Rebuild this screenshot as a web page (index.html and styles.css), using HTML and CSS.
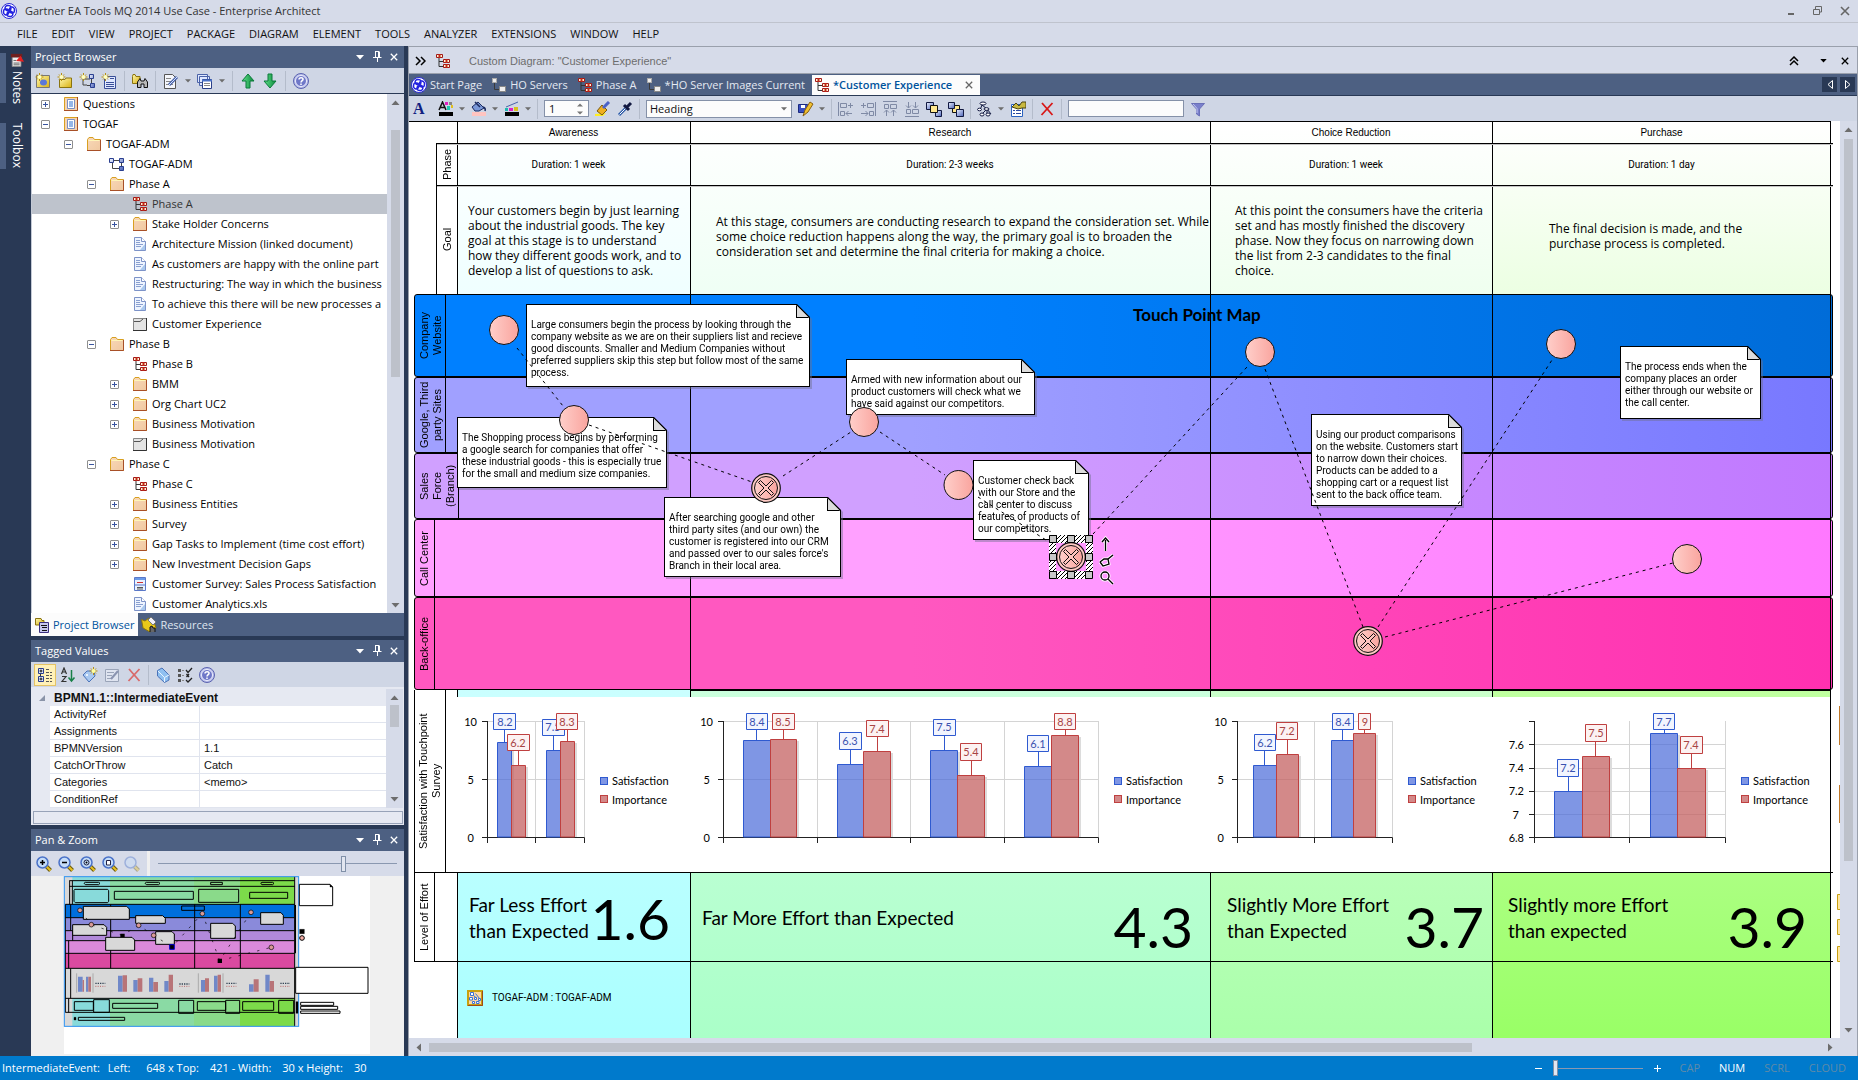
FILE: index.html
```html
<!DOCTYPE html>
<html lang="en">
<head>
<meta charset="utf-8">
<title>Gartner EA Tools MQ 2014 Use Case - Enterprise Architect</title>
<link rel="stylesheet" href="styles.css">
</head>
<body>
<svg class="defs" width="0" height="0" aria-hidden="true">
  <defs>
    <linearGradient id="gFolder" x1="0" y1="0" x2="1" y2="1"><stop offset="0" stop-color="#f8d8b8"/><stop offset="1" stop-color="#f0c8a0"/></linearGradient>
    <linearGradient id="gNode" x1="0" y1="0" x2="1" y2="0"><stop offset="0" stop-color="#ffcfca"/><stop offset="1" stop-color="#f9a49e"/></linearGradient>
    <linearGradient id="gBlue" x1="0" y1="0" x2="1" y2="1"><stop offset="0" stop-color="#eef3ff"/><stop offset="1" stop-color="#4a62b8"/></linearGradient>
    <linearGradient id="gGold" x1="0" y1="0" x2="1" y2="1"><stop offset="0" stop-color="#fff8b0"/><stop offset="1" stop-color="#d8b010"/></linearGradient>
    <linearGradient id="gGreen" x1="0" y1="0" x2="1" y2="0"><stop offset="0" stop-color="#5fe08a"/><stop offset="1" stop-color="#0c8a3c"/></linearGradient>
    <pattern id="hatch" width="4" height="4" patternUnits="userSpaceOnUse"><rect width="4" height="4" fill="#fff"/><path d="M-1 1L1 -1M0 4L4 0M3 5L5 3" stroke="#000"/></pattern>
  </defs>
  <symbol id="i-logo" viewBox="0 0 16 16"><circle cx="8" cy="8" r="7.5" fill="#fff" stroke="#2b2bd8"/><g fill="none" stroke="#2222e0" stroke-width="1.5"><path d="M8 8C3 8 3 2.500 7 2.500S11 6 8 8M8 8C8 3 13.500 3 13.500 7S10 11 8 8M8 8C13 8 13 13.500 9 13.500S5 10 8 8M8 8C8 13 2.500 13 2.500 9S6 5 8 8"/></g></symbol>
  <symbol id="i-folder" viewBox="0 0 16 16"><path d="M1.500 14.500V3.500L3 1.500H7L8.500 3.500H14.500V14.500Z" fill="url(#gFolder)" stroke="#d8a020"/><path d="M2.500 4.500H13.500" stroke="#fff6b8"/><path d="M1 14.500H14.500V4" fill="none" stroke="#a85028"/></symbol>
  <symbol id="i-model" viewBox="0 0 16 16"><path d="M1.500 1.500H14.500V14.500H1.500Z" fill="#f6d3ae" stroke="#d8a020"/><path d="M1 14.500H14.500V1" fill="none" stroke="#a85028"/><path d="M4.500 3.500H11.500V12.500H4.500Z" fill="#fff" stroke="#7b8fc4"/><path d="M6 6H10M6 8H10M6 10H10" stroke="#2d6fd0"/></symbol>
  <symbol id="i-package" viewBox="0 0 16 16"><path d="M4 4.500H11M3.500 6V12.500H6M12.500 6V11" stroke="#444" fill="none"/><g fill="url(#gBlue)" stroke="#2a3f90"><path d="M.5 2.500H4.500V6.500H.5ZM10.500 2.500H14.500V6.500H10.500ZM10.500 10.500H14.500V14.500H10.500Z"/></g><path d="M6 12.500H10" stroke="#444"/></symbol>
  <symbol id="i-tree" viewBox="0 0 16 16"><path d="M4 5V13.500H8M4 8.500H8" stroke="#333" fill="none"/><g fill="#fff3d0" stroke="#a01818"><path d="M1.500 1.500H7.500V4.500H1.500ZM8.500 6.500H14.500V9.500H8.500ZM8.500 11.500H14.500V14.500H8.500Z"/></g><path d="M4.500 1V5M11.500 6V10M11.500 11V15" stroke="#c02818" stroke-width="2"/></symbol>
  <symbol id="i-link" viewBox="0 0 16 16"><path d="M3.500 5V12.500H8" stroke="#3a3a3a" fill="none"/><rect x="1.500" y="1.500" width="4" height="4" fill="#eee" stroke="#aaa"/><rect x="8.500" y="9.500" width="6" height="5" fill="#eee" stroke="#888"/></symbol>
  <symbol id="i-doc" viewBox="0 0 16 16"><path d="M2.500 1.500H9.500L13.500 5.500V14.500H2.500Z" fill="#eef4ff" stroke="#7d93c8"/><path d="M8 14L13 8V14Z" fill="#a9c8ee"/><path d="M9.500 1.500V5.500H13.500" fill="#fff" stroke="#7d93c8"/><path d="M4 4.500H8M4 6.500H8M4 8.500H11M4 10.500H9" stroke="#8aa0d0"/></symbol>
  <symbol id="i-element" viewBox="0 0 16 16"><path d="M1.500 2.500H14.500V14.500H1.500Z" fill="#e4e4e4" stroke="#888"/><path d="M1 14.500H14.500V2" fill="none" stroke="#333"/><path d="M2 5.500H8L11 3" fill="none" stroke="#555"/></symbol>
  <symbol id="i-survey" viewBox="0 0 16 16"><path d="M2.500 1.500H13.500V14.500H2.500Z" fill="#eaf2ff" stroke="#5a78c8"/><path d="M3 3H13" stroke="#6a9ae8" stroke-width="2"/><path d="M5 6.500H11" stroke="#d03030"/><path d="M3 9H13" stroke="#5a78c8"/><path d="M5 11.500H11M5 13H11" stroke="#555"/></symbol>
  <symbol id="i-newmodel" viewBox="0 0 16 16"><path d="M1.500 2.500H14.500V14.500H1.500Z" fill="url(#gGold)" stroke="#777"/><ellipse cx="8.500" cy="9.500" rx="3.500" ry="3" fill="#5a78d8"/><path d="M4.500 0V8M.5 4H8.500M2 1.500L7 6.500M7 1.500L2 6.500" stroke="#b89010"/><circle cx="4.500" cy="4" r="2" fill="#ffffc0"/></symbol>
  <symbol id="i-newfolder" viewBox="0 0 16 16"><path d="M2.500 14.500V6.500H8L9 5H14.500V14.500Z" fill="url(#gGold)" stroke="#8a7410"/><path d="M4.500 0V8M.5 4H8.500M2 1.500L7 6.500M7 1.500L2 6.500" stroke="#b89010"/><circle cx="4.500" cy="4" r="2" fill="#ffffc0"/></symbol>
  <symbol id="i-newdiagram" viewBox="0 0 16 16"><path d="M5 6H11M4 6V12H8M12.500 6V11" stroke="#444" fill="none"/><g fill="url(#gBlue)" stroke="#2a3f90"><path d="M10.500 1.500H14.500V5.500H10.500ZM11.500 10.500H15.500V14.500H11.500Z"/></g><path d="M8 12.500H11" stroke="#444"/><path d="M4.500 0V8M.5 4H8.500M2 1.500L7 6.500M7 1.500L2 6.500" stroke="#b89010"/><circle cx="4.500" cy="4" r="2" fill="#ffffc0"/></symbol>
  <symbol id="i-newelement" viewBox="0 0 16 16"><path d="M3.500 3.500H14.500V15.500H3.500Z" fill="#dfe8ff" stroke="#3a4f98"/><path d="M5 9.500H13M5 11.500H13M5 13.500H13M9 5.500H13" stroke="#3a4f98"/><path d="M4.500 0V8M.5 4H8.500M2 1.500L7 6.500M7 1.500L2 6.500" stroke="#b89010"/><circle cx="4.500" cy="4" r="2" fill="#ffffc0"/></symbol>
  <symbol id="i-find" viewBox="0 0 16 16"><path d="M.5 3.500V10.500H8V3.500H4L3 1.500H1Z" fill="url(#gGold)" stroke="#8a7410"/><path d="M5.500 14.500V9L8 5.500L9 8H12L13 5.500L15.500 9V14.500H12V11H9V14.500Z" fill="#b8b8b8" stroke="#111"/></symbol>
  <symbol id="i-edit" viewBox="0 0 16 16"><path d="M1.500 1.500H9.500L12.500 4.500V15.500H1.500Z" fill="#f4f6fb" stroke="#555"/><path d="M3 5.500H8M3 8.500H8M3 11.500H10" stroke="#888"/><path d="M6 12L14 4" stroke="#4a62a8" stroke-width="3"/><path d="M6 12L14 4" stroke="#cfe0ff"/></symbol>
  <symbol id="i-windows" viewBox="0 0 16 16"><path d="M.5 1.500H10.500V9.500H.5ZM2.500 3.500H12.500V12.500H2.500Z" fill="#dfe8ff" stroke="#4a62a8"/><path d="M5.500 6.500H14.500V15.500H5.500Z" fill="#fff" stroke="#2a4088"/><path d="M5 7.500H15" stroke="#4a72c8" stroke-width="2"/><path d="M7 10.500H13M7 12.500H13" stroke="#888"/></symbol>
  <symbol id="i-up" viewBox="0 0 16 16"><path d="M8 1L14 8H10V15H6V8H2Z" fill="url(#gGreen)" stroke="#0a7a3a"/></symbol>
  <symbol id="i-down" viewBox="0 0 16 16"><path d="M8 15L14 8H10V1H6V8H2Z" fill="url(#gGreen)" stroke="#0a7a3a"/></symbol>
  <symbol id="i-help" viewBox="0 0 16 16"><circle cx="8" cy="8" r="7.500" fill="#b9bfe8" stroke="#5a62b0"/><circle cx="8" cy="8" r="5.500" fill="#6f78c8" stroke="#eef"/><path d="M6 6.500C6 4 10.500 4 10 6.500C9.800 7.500 8 8 8 9.500M8 10.500V12" fill="none" stroke="#fff" stroke-width="1.500"/></symbol>
  <symbol id="i-pin" viewBox="0 0 10 12"><path d="M3 .5H7.500M3.500 1V6.500M6.500 1V6.500M7.500 1V6.500M1 6.500H9.500M5.500 7V11" fill="none" stroke="#fff"/></symbol>
  <symbol id="i-close" viewBox="0 0 10 10"><path d="M1 1L9 9M9 1L1 9" stroke="currentColor" stroke-width="1.600"/></symbol>
  <symbol id="i-caret" viewBox="0 0 8 5"><path d="M0 0H8L4 4.500Z" fill="currentColor"/></symbol>
  <symbol id="i-mag" viewBox="0 0 16 16"><path d="M10 10L14.500 14.500" stroke="#6a5a10" stroke-width="4"/><path d="M10 10L14.500 14.500" stroke="#e8c020" stroke-width="2"/><circle cx="6.500" cy="6.500" r="5.500" fill="#c4dcf8" stroke="#4a72c8" stroke-width="1.500"/></symbol>
  <symbol id="i-cat" viewBox="0 0 16 16"><path d="M3.500 6V10" stroke="#333"/><g fill="#e8eeff" stroke="#2a3f90"><path d="M1.500 1.500H6.500V6.500H1.500ZM1.500 9.500H6.500V14.500H1.500Z"/></g><path d="M4 2.500V5.500M2.500 4H5.500M4 10.500V13.500M2.500 12H5.500" stroke="#111"/><path d="M9 2.500H12M9 5.500H15M9 8.500H15M9 11.500H15M9 14.500H15" stroke="#555" stroke-dasharray="3 1"/></symbol>
  <symbol id="i-sort" viewBox="0 0 16 16"><path d="M1.500 7L4 1L6.500 7M2.500 5H5.500M2 9.500H6L2 14.500H6.500" fill="none" stroke="#333" stroke-width="1.200"/><path d="M11.500 3V13M8.500 10.500L11.500 14L14.500 10.500" fill="none" stroke="#188048" stroke-width="1.500"/></symbol>
  <symbol id="i-tagnew" viewBox="0 0 16 16"><path d="M1 8L5 4H12L13 9L7 15Z" fill="#a8c8f0" stroke="#4a72b8"/><circle cx="5" cy="8" r="1" fill="#fff"/><path d="M11.500 0V8M7.500 4H15.500M9 1.500L14 6.500M14 1.500L9 6.500" stroke="#b89010"/><circle cx="11.500" cy="4" r="2" fill="#ffffa0"/></symbol>
  <symbol id="i-note" viewBox="0 0 16 16"><path d="M1.500 2.500H14.500V14.500H1.500Z" fill="#dfe4f0" stroke="#9aa4b8"/><path d="M3 5.500H10M3 8.500H8M3 11.500H7" stroke="#9aa4b8"/><path d="M7 12L14 4" stroke="#8a94b0" stroke-width="2"/></symbol>
  <symbol id="i-del" viewBox="0 0 16 16"><path d="M3 2L13.500 14M13.500 2L2.500 14" stroke="currentColor" stroke-width="1.800"/></symbol>
  <symbol id="i-tag" viewBox="0 0 16 16"><path d="M2.500 3.500L7 1L14 8V13L9.500 15.500L2.500 9Z" fill="#8fc0f0" stroke="#4a72b8"/><path d="M3 4L9.500 10.500L14 8M9.500 10.500V15" stroke="#e8f4ff" fill="none"/></symbol>
  <symbol id="i-checks" viewBox="0 0 16 16"><path d="M1 2H4V5H1ZM1 7H4V10H1ZM1 12H4V15H1Z" fill="#555"/><path d="M5 3.500H7M5 8.500H7M5 13.500H7" stroke="#888"/><path d="M9 3L11 5.500L15 1M9 13L11 15L15 11M9.500 7L12 10M12 7L9.500 10" fill="none" stroke="#222" stroke-width="1.300"/></symbol>
  <symbol id="i-cart" viewBox="0 0 16 16"><path d="M1.500 1.500H7L8 3.500H10V8H1.500Z" fill="url(#gGold)" stroke="#8a7410"/><path d="M5.500 5.500H14.500V15.500H5.500Z" fill="#c8c8ee" stroke="#3a3080"/><path d="M7 8.500H13M8 10.500H13M8 13.500H13" stroke="#111"/></symbol>
  <symbol id="i-res" viewBox="0 0 16 16"><path d="M.5 2.500L4 4L8 1L13 5L15 11L9 15L2 11Z" fill="#e8c818" stroke="#8a7410"/><path d="M7 3L10 0L15 5L12 8Z" fill="#f0f0f8" stroke="#777"/><path d="M9 15V10L11 9L12 11H14V15" fill="#666" stroke="#111"/></symbol>
  <symbol id="i-fontcolor" viewBox="0 0 16 16"><path d="M1 9L4.500 1L8 9M2 6.500H7" fill="none" stroke="#111" stroke-width="1.500"/><path d="M7 1H10V4H7Z" fill="#e020c0"/><path d="M11 1H14V4H11Z" fill="#888"/><path d="M9 5H12V9H9Z" fill="#20c8b0"/><path d="M13 4H15V7H13Z" fill="#e0c020"/><path d="M1 11H15V15H1Z" fill="#000"/></symbol>
  <symbol id="i-fill" viewBox="0 0 16 16"><path d="M1 6L7 1L13 7L8 10H4Z" fill="#7a98d8" stroke="#1a2a60"/><path d="M4 1L9 6M12 6C15 7 14 10 14 10" stroke="#1a2a60" fill="none" stroke-width="1.500"/><path d="M1 11H15V15H1Z" fill="#ffc4c0"/></symbol>
  <symbol id="i-line" viewBox="0 0 16 16"><path d="M2 6L14 1" stroke="#4a62a8"/><path d="M1 7H4V10H1Z" fill="#20b8b0"/><path d="M5 7H9V10H5Z" fill="#e020c0"/><path d="M10 6H14V10H10Z" fill="#d8c020"/><path d="M1 11H15V15H1Z" fill="#000"/></symbol>
  <symbol id="i-brush" viewBox="0 0 16 16"><path d="M0 13L11 12L8 15H0Z" fill="#ffee20"/><path d="M2 10L7 4L12 9L7 14Z" fill="#f0b020" stroke="#7a5a10"/><path d="M8 7L14 1" stroke="#4a62c8" stroke-width="3"/></symbol>
  <symbol id="i-dropper" viewBox="0 0 16 16"><path d="M2 14L9 7" stroke="#2a5aa8" stroke-width="3"/><path d="M2.500 13.500L9 7" stroke="#fff"/><path d="M7 4L12 9M10 6L14 2" stroke="#111840" stroke-width="3"/></symbol>
  <symbol id="i-save" viewBox="0 0 16 16"><path d="M.5 3.500H9.500V11.500H.5Z" fill="#3a4fc0" stroke="#1a2a80"/><path d="M3 4H7V7H3Z" fill="#fff"/><path d="M5 15L7 9L12 1L15 3L10 11Z" fill="#f0c030" stroke="#8a6010"/></symbol>
  <symbol id="i-all" viewBox="0 0 16 16"><g fill="none" stroke="#7f8aa5"><path d="M.5 1V15M2.500 2.500H8.500V6.500H2.500ZM2.500 10.500H6.500V14.500H2.500ZM10 4.500H15M12.500 2V7M8 12.500H14M10.500 10L8 12.500L10.500 15"/></g></symbol>
  <symbol id="i-alr" viewBox="0 0 16 16"><g fill="none" stroke="#7f8aa5"><path d="M15.500 1V15M7.500 2.500H13.500V6.500H7.500ZM9.500 10.500H13.500V14.500H9.500ZM1 4.500H6M3.500 2V7M1 12.500H8M5.500 10L8 12.500L5.500 15"/></g></symbol>
  <symbol id="i-alt" viewBox="0 0 16 16"><g fill="none" stroke="#7f8aa5"><path d="M1 .5H15M2.500 3.500H6.500V7.500H2.500ZM8.500 3.500H14.500V7.500H8.500ZM4.500 9V15M2 11.500L4.500 9L7 11.500M11.500 9V15M9 11.500L11.500 9L14 11.500"/></g></symbol>
  <symbol id="i-alb" viewBox="0 0 16 16"><g fill="none" stroke="#7f8aa5"><path d="M1 15.500H15M2.500 8.500H6.500V12.500H2.500ZM8.500 8.500H14.500V12.500H8.500ZM4.500 1V7M2 4.500L4.500 7L7 4.500M11.500 1V7M9 4.500L11.500 7L14 4.500"/></g></symbol>
  <symbol id="i-front" viewBox="0 0 16 16"><path d="M.5 1.500H7.500V8.500H.5Z" fill="url(#gBlue)" stroke="#111840"/><path d="M9.500 9.500H15.500V15.500H9.500Z" fill="url(#gBlue)" stroke="#111840"/><path d="M4.500 4.500H11.500V11.500H4.500Z" fill="#ffe890" stroke="#111"/></symbol>
  <symbol id="i-back" viewBox="0 0 16 16"><path d="M4.500 4.500H11.500V11.500H4.500Z" fill="#ffe890" stroke="#111"/><path d="M.5 1.500H6.500V7.500H.5Z" fill="url(#gBlue)" stroke="#111840"/><path d="M8.500 8.500H15.500V15.500H8.500Z" fill="url(#gBlue)" stroke="#111840"/></symbol>
  <symbol id="i-layout" viewBox="0 0 16 16"><g fill="#fff" stroke="#111840"><path d="M5 4L3 9M5 4L10 8L5 13M10 8L14 13M10 8V13" fill="none"/><ellipse cx="6" cy="2.500" rx="3" ry="1.500"/><ellipse cx="2.500" cy="8.500" rx="2" ry="1.300"/><ellipse cx="9.500" cy="8" rx="2.500" ry="1.300"/><ellipse cx="5" cy="13.500" rx="2" ry="1.500"/><ellipse cx="11" cy="13.500" rx="2" ry="1.500"/></g></symbol>
  <symbol id="i-props" viewBox="0 0 16 16"><path d="M1.500 3.500H12.500V15.500H1.500Z" fill="#fff" stroke="#2a62c0"/><path d="M3 9.500H5M3 12.500H5M6 9.500H11M6 12.500H11" stroke="#2a4aa0"/><path d="M2 6L6 2L9 5L12 1H16V7H12L8 8Z" fill="#c8b840" stroke="#4a4410"/></symbol>
  <symbol id="i-funnel" viewBox="0 0 16 16"><path d="M1.500 2.500H14.500L9.500 8V15L6.500 13V8Z" fill="#7a80cc" stroke="#6a70b8"/><path d="M3 3L7 7.500V12" stroke="#c4c8f0" fill="none"/></symbol>
  <symbol id="i-notes" viewBox="0 0 16 16"><path d="M2.500 4.500H12.500V15.500H2.500Z" fill="#eee" stroke="#888"/><path d="M1 1H14V5H1Z" fill="#702020"/><path d="M7 9L12 3L16 10Z" fill="#e82020"/><path d="M4 8.500H7M4 11.500H11M4 13.500H11" stroke="#555"/></symbol>
  <symbol id="i-hyper" viewBox="0 0 16 16"><path d="M1 1H15V15H1Z" fill="#ffd9a0" stroke="#c8a010" stroke-width="2"/><path d="M1 15.500H15.500V1" fill="none" stroke="#a04818"/><g fill="#fff" stroke="#3a72d8"><path d="M3.500 2.500H6.500V5.500H3.500ZM2.500 7.500H5.500V10H2.500ZM7.500 7.500H9.500V9.500H7.500ZM11.500 8.500H13.500V10.500H11.500ZM5.500 11.500H7.500V13.500H5.500ZM9.500 11.500H12V13.500H9.500ZM6.500 5.500L9.500 8M8.500 3.500L12.500 8.500"/></g></symbol>
  <symbol id="n-cancel" viewBox="0 0 30 30"><circle cx="15" cy="15" r="14.300" fill="#ffcac4" stroke="#111" stroke-width="1.200"/><circle cx="15" cy="15" r="11.500" fill="url(#gNode)" stroke="#111"/><path d="M7.500 9.500L9.500 7.500L15 13L20.500 7.500L22.500 9.500L17 15L22.500 20.500L20.500 22.500L15 17L9.500 22.500L7.500 20.500L13 15Z" fill="#ffc4be" stroke="#111"/></symbol>
</svg>

<header class="titlebar">
  <svg class="ic"><use href="#i-logo"/></svg>
  <h1>Gartner EA Tools MQ 2014 Use Case - Enterprise Architect</h1>
  <div class="winbtns">
    <button type="button" aria-label="Minimize"><svg width="8" height="10"><path d="M1 8H7" stroke="#666" stroke-width="2"/></svg></button>
    <button type="button" aria-label="Restore"><svg width="9" height="10"><path d="M2.500 3V.5H8.500V6H6M.5 3.500H6.500V8.500H.5Z" fill="none" stroke="#666"/></svg></button>
    <button type="button" aria-label="Close"><svg width="10" height="10"><use href="#i-close"/></svg></button>
  </div>
</header>
<nav class="menubar" aria-label="Main menu">
  <button type="button">FILE</button><button type="button">EDIT</button><button type="button">VIEW</button><button type="button">PROJECT</button><button type="button">PACKAGE</button><button type="button">DIAGRAM</button><button type="button">ELEMENT</button><button type="button">TOOLS</button><button type="button">ANALYZER</button><button type="button">EXTENSIONS</button><button type="button">WINDOW</button><button type="button">HELP</button>
</nav>

<div class="workspace">
  <nav class="dockstrip" aria-label="Hidden panels">
    <button type="button" class="docktab"><svg class="ic"><use href="#i-notes"/></svg>Notes</button>
    <button type="button" class="docktab">Toolbox</button>
  </nav>

  <aside class="dock">
    <section class="panel browser">
      <header class="panel-head"><h2>Project Browser</h2>
        <button type="button" aria-label="Options"><svg width="8" height="5"><use href="#i-caret"/></svg></button><button type="button" aria-label="Pin"><svg width="10" height="12"><use href="#i-pin"/></svg></button><button type="button" aria-label="Close"><svg width="8" height="8"><use href="#i-close"/></svg></button></header>
      <div class="toolbar">
        <button type="button" aria-label="New model"><svg class="ic"><use href="#i-newmodel"/></svg></button>
        <button type="button" aria-label="New package"><svg class="ic"><use href="#i-newfolder"/></svg></button>
        <button type="button" aria-label="New diagram"><svg class="ic"><use href="#i-newdiagram"/></svg></button>
        <button type="button" aria-label="New element"><svg class="ic"><use href="#i-newelement"/></svg></button>
        <i class="sep"></i>
        <button type="button" aria-label="Find"><svg class="ic"><use href="#i-find"/></svg></button>
        <i class="sep"></i>
        <button type="button" aria-label="Edit"><svg class="ic"><use href="#i-edit"/></svg><svg class="car"><use href="#i-caret"/></svg></button>
        <button type="button" aria-label="Windows"><svg class="ic"><use href="#i-windows"/></svg><svg class="car"><use href="#i-caret"/></svg></button>
        <i class="sep"></i>
        <button type="button" aria-label="Move up"><svg class="ic"><use href="#i-up"/></svg></button>
        <button type="button" aria-label="Move down"><svg class="ic"><use href="#i-down"/></svg></button>
        <i class="sep"></i>
        <button type="button" aria-label="Help"><svg class="ic"><use href="#i-help"/></svg></button>
      </div>
      <div class="tree-wrap">
        <ul class="tree">
          <li class="l0"><button type="button" class="ex plus" aria-label="Expand"></button><svg class="ic"><use href="#i-model"/></svg><span>Questions</span></li>
          <li class="l0"><button type="button" class="ex" aria-label="Collapse"></button><svg class="ic"><use href="#i-model"/></svg><span>TOGAF</span></li>
          <li class="l1"><button type="button" class="ex" aria-label="Collapse"></button><svg class="ic"><use href="#i-folder"/></svg><span>TOGAF-ADM</span></li>
          <li class="l2"><i class="ex none"></i><svg class="ic"><use href="#i-package"/></svg><span>TOGAF-ADM</span></li>
          <li class="l2"><button type="button" class="ex" aria-label="Collapse"></button><svg class="ic"><use href="#i-folder"/></svg><span>Phase A</span></li>
          <li class="l3 sel"><i class="ex none"></i><svg class="ic"><use href="#i-tree"/></svg><span>Phase A</span></li>
          <li class="l3"><button type="button" class="ex plus" aria-label="Expand"></button><svg class="ic"><use href="#i-folder"/></svg><span>Stake Holder Concerns</span></li>
          <li class="l3"><i class="ex none"></i><svg class="ic"><use href="#i-doc"/></svg><span>Architecture Mission (linked document)</span></li>
          <li class="l3"><i class="ex none"></i><svg class="ic"><use href="#i-doc"/></svg><span>As customers are happy with the online part</span></li>
          <li class="l3"><i class="ex none"></i><svg class="ic"><use href="#i-doc"/></svg><span>Restructuring: The way in which the business</span></li>
          <li class="l3"><i class="ex none"></i><svg class="ic"><use href="#i-doc"/></svg><span>To achieve this there will be new processes a</span></li>
          <li class="l3"><i class="ex none"></i><svg class="ic"><use href="#i-element"/></svg><span>Customer Experience</span></li>
          <li class="l2"><button type="button" class="ex" aria-label="Collapse"></button><svg class="ic"><use href="#i-folder"/></svg><span>Phase B</span></li>
          <li class="l3"><i class="ex none"></i><svg class="ic"><use href="#i-tree"/></svg><span>Phase B</span></li>
          <li class="l3"><button type="button" class="ex plus" aria-label="Expand"></button><svg class="ic"><use href="#i-folder"/></svg><span>BMM</span></li>
          <li class="l3"><button type="button" class="ex plus" aria-label="Expand"></button><svg class="ic"><use href="#i-folder"/></svg><span>Org Chart UC2</span></li>
          <li class="l3"><button type="button" class="ex plus" aria-label="Expand"></button><svg class="ic"><use href="#i-folder"/></svg><span>Business Motivation</span></li>
          <li class="l3"><i class="ex none"></i><svg class="ic"><use href="#i-element"/></svg><span>Business Motivation</span></li>
          <li class="l2"><button type="button" class="ex" aria-label="Collapse"></button><svg class="ic"><use href="#i-folder"/></svg><span>Phase C</span></li>
          <li class="l3"><i class="ex none"></i><svg class="ic"><use href="#i-tree"/></svg><span>Phase C</span></li>
          <li class="l3"><button type="button" class="ex plus" aria-label="Expand"></button><svg class="ic"><use href="#i-folder"/></svg><span>Business Entities</span></li>
          <li class="l3"><button type="button" class="ex plus" aria-label="Expand"></button><svg class="ic"><use href="#i-folder"/></svg><span>Survey</span></li>
          <li class="l3"><button type="button" class="ex plus" aria-label="Expand"></button><svg class="ic"><use href="#i-folder"/></svg><span>Gap Tasks to Implement (time cost effort)</span></li>
          <li class="l3"><button type="button" class="ex plus" aria-label="Expand"></button><svg class="ic"><use href="#i-folder"/></svg><span>New Investment Decision Gaps</span></li>
          <li class="l3"><i class="ex none"></i><svg class="ic"><use href="#i-survey"/></svg><span>Customer Survey: Sales Process Satisfaction</span></li>
          <li class="l3"><i class="ex none"></i><svg class="ic"><use href="#i-doc"/></svg><span>Customer Analytics.xls</span></li>
        </ul>
        <div class="vscroll tree-scroll"><svg class="car up"><use href="#i-caret"/></svg><div class="track"><div class="thumb"></div></div><svg class="car"><use href="#i-caret"/></svg></div>
      </div>
      <div class="panel-tabs">
        <button type="button" class="on"><svg class="ic"><use href="#i-cart"/></svg>Project Browser</button><button type="button"><svg class="ic"><use href="#i-res"/></svg>Resources</button>
      </div>
    </section>

    <section class="panel">
      <header class="panel-head"><h2>Tagged Values</h2>
        <button type="button" aria-label="Options"><svg width="8" height="5"><use href="#i-caret"/></svg></button><button type="button" aria-label="Pin"><svg width="10" height="12"><use href="#i-pin"/></svg></button><button type="button" aria-label="Close"><svg width="8" height="8"><use href="#i-close"/></svg></button></header>
      <div class="toolbar tight">
        <button type="button" class="pressed" aria-label="Categorize"><svg class="ic"><use href="#i-cat"/></svg></button>
        <button type="button" aria-label="Sort"><svg class="ic"><use href="#i-sort"/></svg></button>
        <button type="button" aria-label="New tag"><svg class="ic"><use href="#i-tagnew"/></svg></button>
        <button type="button" aria-label="Edit note"><svg class="ic"><use href="#i-note"/></svg></button>
        <button type="button" class="soft" aria-label="Delete"><svg class="ic"><use href="#i-del"/></svg></button>
        <i class="sep"></i>
        <button type="button" aria-label="Tag"><svg class="ic"><use href="#i-tag"/></svg></button>
        <button type="button" aria-label="Options"><svg class="ic"><use href="#i-checks"/></svg></button>
        <button type="button" aria-label="Help"><svg class="ic"><use href="#i-help"/></svg></button>
      </div>
      <div class="props">
        <div class="props-body">
          <table>
            <colgroup><col class="col-gut"><col class="col-name"><col></colgroup>
            <thead><tr><td class="gut"><svg width="6" height="6"><path d="M6 0V6H0Z" fill="#8a94a8"/></svg></td><th colspan="2">BPMN1.1::IntermediateEvent</th></tr></thead>
            <tbody>
              <tr><td class="gut"></td><td>ActivityRef</td><td></td></tr>
              <tr><td class="gut"></td><td>Assignments</td><td></td></tr>
              <tr><td class="gut"></td><td>BPMNVersion</td><td>1.1</td></tr>
              <tr><td class="gut"></td><td>CatchOrThrow</td><td>Catch</td></tr>
              <tr><td class="gut"></td><td>Categories</td><td>&lt;memo&gt;</td></tr>
              <tr><td class="gut"></td><td>ConditionRef</td><td></td></tr>
            </tbody>
          </table>
          <div class="vscroll props-scroll"><svg class="car up"><use href="#i-caret"/></svg><div class="track"><div class="thumb"></div></div><svg class="car"><use href="#i-caret"/></svg></div>
        </div>
        <div class="props-note"></div>
      </div>
    </section>

    <section class="panel">
      <header class="panel-head"><h2>Pan &amp; Zoom</h2>
        <button type="button" aria-label="Options"><svg width="8" height="5"><use href="#i-caret"/></svg></button><button type="button" aria-label="Pin"><svg width="10" height="12"><use href="#i-pin"/></svg></button><button type="button" aria-label="Close"><svg width="8" height="8"><use href="#i-close"/></svg></button></header>
      <div class="toolbar tight zoombar">
        <button type="button" aria-label="Zoom in"><svg class="ic" viewBox="0 0 16 16"><use href="#i-mag"/><path d="M4 6.500H9M6.500 4V9" stroke="#000" stroke-width="1.500"/></svg></button>
        <button type="button" aria-label="Zoom out"><svg class="ic" viewBox="0 0 16 16"><use href="#i-mag"/><path d="M4 6.500H9" stroke="#000" stroke-width="1.500"/></svg></button>
        <button type="button" aria-label="Zoom to fit"><svg class="ic" viewBox="0 0 16 16"><use href="#i-mag"/><circle cx="6.500" cy="6.500" r="2.500" fill="none" stroke="#224"/><circle cx="6.500" cy="6.500" r="1"/></svg></button>
        <button type="button" aria-label="Zoom to page"><svg class="ic" viewBox="0 0 16 16"><use href="#i-mag"/><path d="M4.500 4.500H8.500V9H4.500Z" fill="#fff" stroke="#224"/></svg></button>
        <button type="button" class="dim" aria-label="Zoom reset"><svg class="ic"><use href="#i-mag"/></svg></button>
        <div class="zoomslide"><input type="range" aria-label="Zoom level" min="0" max="100" value="78"></div>
      </div>
      <div class="overview">
        <svg width="373" height="180" viewBox="93 738 1119 540" role="img" aria-label="Diagram overview">
          <rect x="192" y="738" width="918" height="534" fill="#fff"/>
          <rect x="194" y="740" width="702" height="449" fill="#d8d8d8"/>
          <path d="M217 740H330V1189H217Z" fill="#88dada"/><path d="M330 740H582V1189H330Z" fill="#8adaa4"/><path d="M582 740H720V1189H582Z" fill="#8ada8a"/><path d="M720 740H883V1189H720Z" fill="#7cda4a"/>
          <path d="M196 823H884V863H196Z" fill="#006fdc"/><path d="M196 863H884V902H196Z" fill="#8a8ada"/><path d="M196 902H884V932H196Z" fill="#b289da"/><path d="M196 932H884V970H196Z" fill="#da89da"/><path d="M196 970H884V1015H196Z" fill="#da4aa0"/><path d="M196 1015H884V1105H196Z" fill="#d8d8d8"/>
          <g stroke="#000" stroke-width="3" fill="none">
            <path d="M208 752H884M208 769H884M196 823H884M196 863H884M196 902H884M196 932H884M196 970H884M196 1015H884M196 1105H884M196 1147H884M332 823V1015M584 823V1015M721 823V1015M884 740V1189M209 752V823M217 752V823M212 823V902M218 902V932M206 932V1015M212 1015V1105M206 1105V1147M196 823V1147"/>
            <path d="M224 778H323L326 782V814L323 818H226L222 814V781ZM343 784H580V808H343ZM596 778H716V817H596ZM749 787H863V805H749ZM256 757H296L300 760L296 764H256L252 760ZM439 757H476L480 760L476 764H439L435 760ZM632 757H667V764H632ZM786 757H818L822 760L818 764H786L782 760Z"/>
            <path d="M545 828H613V841H545ZM223 1115H280V1141H223ZM281 1109H328V1147H281ZM338 1120H473V1135H338ZM536 1111H581V1150H536ZM592 1115H677V1141H592ZM677 1111H719V1150H677ZM728 1115H821V1141H728ZM836 1111H881V1150H836ZM235 1162H374V1171H235Z"/>
          </g>
          <g stroke="#000" stroke-width="3" fill="#d8d8d8"><path d="M250 829H380L388 837V868H250ZM218 884H312L320 892V916H218ZM317 922H396L404 930V961H317ZM407 857H488L496 865V880H407ZM467 905H516L523 912V943H467ZM632 880H698L706 888V925H632ZM782 848H843L850 856V883H782Z"/></g>
          <path d="M240 841L274 884L367 916L416 886L461 916L516 951L607 850L659 992L753 847M659 992L814 952" fill="none" stroke="#000" stroke-width="2" stroke-dasharray="7 22"/>
          <g fill="#da9a96" stroke="#000" stroke-width="2"><circle cx="240" cy="841" r="7"/><circle cx="274" cy="884" r="7"/><circle cx="416" cy="886" r="7"/><circle cx="461" cy="916" r="7"/><circle cx="607" cy="851" r="7"/><circle cx="753" cy="847" r="7"/><circle cx="814" cy="952" r="7"/></g>
          <path d="M361 911H374V922H361ZM653 986H666V999H653Z"/><path d="M509 944H523V958H509Z" stroke="#0000d0" stroke-width="3"/>
          <path d="M234 1040H248V1085H234ZM258 1040H265V1085H258ZM354 1037H368V1085H354ZM400 1050H413V1085H400ZM447 1043H460V1085H447ZM493 1053H506V1085H493ZM603 1050H615V1085H603ZM642 1037H653V1085H642ZM747 1063H761V1085H747ZM796 1034H809V1085H796Z" fill="#7088c8"/>
          <path d="M248 1050H252V1085H248ZM265 1040H273V1085H265ZM368 1036H381V1085H368ZM413 1045H427V1085H413ZM460 1056H474V1085H460ZM506 1034H519V1085H506ZM615 1045H627V1085H615ZM653 1034H663V1085H653ZM761 1048H776V1085H761ZM809 1053H822V1085H809Z" fill="#b87478"/>
          <path d="M230 1030V1088M279 1030V1088M595 1030V1088M669 1030V1088" stroke="#aaa" stroke-width="3"/>
          <path d="M286 1060H316M538 1062H568M679 1060H709M841 1060H870" stroke="#345" stroke-width="4" stroke-dasharray="4 3"/><path d="M286 1069H316M538 1069H568M679 1069H709M841 1069H870" stroke="#b66" stroke-width="3" stroke-dasharray="3 4"/>
          <rect x="193" y="740" width="703" height="449" fill="none" stroke="#2a90f0" stroke-width="3"/>
          <path d="M898 763H990L998 771V827H898ZM887 1012H1104V1090H887ZM902 1117H1001V1126H902ZM902 1129H1013V1138H902ZM902 1143H1020V1150H902Z" fill="#fff" stroke="#000" stroke-width="3"/>
          <path d="M990 763V771H998M899 898H913V911H899ZM888 1115H894V1150H888ZM222 1162H228V1170H222Z" stroke="#000"/><path d="M886 825V970" stroke="#000" stroke-width="4"/>
          <circle cx="906" cy="924" r="7" fill="#f8b0a8" stroke="#000" stroke-width="3"/>
        </svg>
      </div>
    </section>
  </aside>

  <main class="editor">
    <header class="caption">
      <svg width="11" height="10"><path d="M1 1L5 5L1 9M6 1L10 5L6 9" fill="none" stroke="#000" stroke-width="1.500"/></svg>
      <svg class="ic"><use href="#i-tree"/></svg>
      <span>Custom Diagram: "Customer Experience"</span>
      <button type="button" aria-label="Collapse"><svg width="10" height="10"><path d="M1 5L5 1L9 5M1 9L5 5L9 9" fill="none" stroke="#000" stroke-width="1.500"/></svg></button><button type="button" class="wide-gap" aria-label="Menu"><svg width="7" height="4"><use href="#i-caret"/></svg></button><button type="button" aria-label="Close"><svg width="8" height="8"><use href="#i-close"/></svg></button>
    </header>
    <div class="tabs">
      <button type="button" class="tab"><svg class="ic"><use href="#i-logo"/></svg>Start Page</button>
      <button type="button" class="tab"><svg class="ic"><use href="#i-link"/></svg>HO Servers</button>
      <button type="button" class="tab"><svg class="ic"><use href="#i-tree"/></svg>Phase A</button>
      <button type="button" class="tab"><svg class="ic"><use href="#i-link"/></svg>*HO Server Images Current</button>
      <button type="button" class="tab on"><svg class="ic"><use href="#i-tree"/></svg>*Customer Experience<svg class="x" width="8" height="8"><use href="#i-close"/></svg></button>
      <div class="tabnav"><button type="button" aria-label="Previous"><svg width="6" height="9"><path d="M5.500 .5V8.500L1 4.500Z" fill="none" stroke="#fff"/></svg></button><button type="button" aria-label="Next"><svg width="6" height="9"><path d="M.5 .5V8.500L5 4.500Z" fill="none" stroke="#fff"/></svg></button></div>
    </div>
    <div class="toolbar draw">
      <button type="button" class="bigA">A</button>
      <button type="button" aria-label="Font colour"><svg class="ic"><use href="#i-fontcolor"/></svg><svg class="car"><use href="#i-caret"/></svg></button>
      <button type="button" aria-label="Fill colour"><svg class="ic"><use href="#i-fill"/></svg><svg class="car"><use href="#i-caret"/></svg></button>
      <button type="button" aria-label="Line colour"><svg class="ic"><use href="#i-line"/></svg><svg class="car"><use href="#i-caret"/></svg></button>
      <i class="sep"></i>
      <span class="spin"><input type="text" inputmode="numeric" value="1" aria-label="Line width"><svg width="6" height="12"><path d="M0 3.500L3 .5L6 3.500ZM0 8.500H6L3 11.500Z" fill="#777"/></svg></span>
      <button type="button" aria-label="Format painter"><svg class="ic"><use href="#i-brush"/></svg></button>
      <button type="button" aria-label="Pick style"><svg class="ic"><use href="#i-dropper"/></svg></button>
      <i class="sep"></i>
      <span class="pick"><select aria-label="Style"><option>Heading</option></select><svg class="car"><use href="#i-caret"/></svg></span>
      <button type="button" aria-label="Save style"><svg class="ic"><use href="#i-save"/></svg><svg class="car"><use href="#i-caret"/></svg></button>
      <i class="sep"></i>
      <button type="button" aria-label="Align left"><svg class="ic"><use href="#i-all"/></svg></button>
      <button type="button" aria-label="Align right"><svg class="ic"><use href="#i-alr"/></svg></button>
      <button type="button" aria-label="Align top"><svg class="ic"><use href="#i-alt"/></svg></button>
      <button type="button" aria-label="Align bottom"><svg class="ic"><use href="#i-alb"/></svg></button>
      <button type="button" aria-label="Bring forward"><svg class="ic"><use href="#i-front"/></svg></button>
      <button type="button" aria-label="Send back"><svg class="ic"><use href="#i-back"/></svg></button>
      <i class="sep"></i>
      <button type="button" aria-label="Layout"><svg class="ic"><use href="#i-layout"/></svg><svg class="car"><use href="#i-caret"/></svg></button>
      <button type="button" aria-label="Properties"><svg class="ic"><use href="#i-props"/></svg></button>
      <i class="sep"></i>
      <button type="button" class="red" aria-label="Delete"><svg class="ic"><use href="#i-del"/></svg></button>
      <i class="sep"></i>
      <input type="text" class="filter" aria-label="Filter">
      <button type="button" aria-label="Apply filter"><svg class="ic"><use href="#i-funnel"/></svg></button>
    </div>

    <div class="view">
      <div class="canvas">
        <div class="sheet">
          <div class="columns cols"><i></i><i class="c1"></i><i class="c2"></i><i class="c3"></i><i class="c4"></i></div>
          <div class="row heads cols"><i></i><span>Awareness</span><span>Research</span><span>Choice Reduction</span><span>Purchase</span></div>
          <div class="row phase cols"><b class="side">Phase</b><span>Duration: 1 week</span><span>Duration: 2-3 weeks</span><span>Duration: 1 week</span><span>Duration: 1 day</span></div>
          <div class="row goal cols"><b class="side">Goal</b>
            <p class="g1">Your customers begin by just learning<br>about the industrial goods. The key<br>goal at this stage is to understand<br>how they different goods work, and to<br>develop a list of questions to ask.</p>
            <p class="g2">At this stage, consumers are conducting research to expand the consideration set. While<br>some choice reduction happens along the way, the primary goal is to broaden the<br>consideration set and determine the final criteria for making a choice.</p>
            <p class="g3">At this point the consumers have the criteria<br>set and has mostly finished the discovery<br>phase. Now they focus on narrowing down<br>the list from 2-3 candidates to the final<br>choice.</p>
            <p class="g4">The final decision is made, and the<br>purchase process is completed.</p>
          </div>
          <div class="lanes">
            <div class="lane web"><b>Company<br>Website</b></div>
            <div class="lane third"><b>Google, Third<br>party Sites</b></div>
            <div class="lane sales"><b>Sales<br>Force<br>(Branch)</b></div>
            <div class="lane call"><b>Call Center</b></div>
            <div class="lane office"><b>Back-office</b></div>
            <div class="lane-lines cols"><i></i><i></i><i></i><i></i><i></i></div>
            <h3>Touch Point Map</h3>
          </div>
          <div class="row survey cols"><b class="side">Satisfaction with Touchpoint<br>Survey</b>
            <svg class="chart" width="233" height="175" viewBox="457 697 233 175">
              <path class="grid" d="M487 721.500H584.500M487 779.500H584.500M535.500 721V837M584.500 721V837"/>
              <path class="shade" d="M512 744H514V837H512ZM526 767H528V837H526ZM575 743H577V837H575Z"/>
              <path class="axis" d="M487.500 721V843M482 721.500H488M482 779.500H488M482 837.500H584.500V843M535.500 837V843"/>
              <path class="sat" d="M497.500 742.500H511.500V837H497.500ZM546.500 750.500H560.500V837H546.500Z"/><path class="imp" d="M511.500 765.500H525.500V837H511.500ZM560.500 741.500H574.500V837H560.500Z"/>
              <path class="sl" d="M504.500 730V742M493.500 713.500H515.500V729.500H493.500ZM553.500 735V750M542.500 719.500H564.500V735.500H542.500Z"/>
              <g class="ts"><text x="505" y="726">8.2</text><text x="553" y="731">7.5</text></g>
              <path class="il" d="M518.500 751V765M507.500 734.500H529.500V750.500H507.500ZM567.500 730V741M556.500 713.500H577.500V729.500H556.500Z"/>
              <g class="ti"><text x="518" y="747">6.2</text><text x="567" y="726">8.3</text></g>
              <g class="tick"><text x="477" y="726">10</text><text x="474" y="784">5</text><text x="474" y="842">0</text></g>
              <rect class="sat" x="600.500" y="777.500" width="7" height="7"/><rect class="imp" x="600.500" y="795.500" width="7" height="7"/><g class="leg"><text x="612" y="785">Satisfaction</text><text x="612" y="804">Importance</text></g>
            </svg>
            <svg class="chart" width="520" height="175" viewBox="690 697 520 175">
              <path class="grid" d="M723 721.500H1098.500M723 779.500H1098.500M817.500 721V837M910.500 721V837M1004.500 721V837M1098.500 721V837"/>
              <path class="shade" d="M797 741H799V837H797ZM891 753H893V837H891ZM958 752H960V776H958ZM985 777H987V837H985ZM1079 737H1081V837H1079Z"/>
              <path class="axis" d="M723.500 721V843M718 721.500H724M718 779.500H724M718 837.500H1098.500V843M817.500 837V843M910.500 837V843M1004.500 837V843"/>
              <path class="sat" d="M743.500 740.500H770.500V837H743.500ZM837.500 764.500H863.500V837H837.500ZM930.500 750.500H957.500V837H930.500ZM1024.500 766.500H1051.500V837H1024.500Z"/><path class="imp" d="M770.500 739.500H796.500V837H770.500ZM863.500 751.500H890.500V837H863.500ZM957.500 775.500H984.500V837H957.500ZM1051.500 735.500H1078.500V837H1051.500Z"/>
              <path class="sl" d="M756.500 730V740M746.500 713.500H767.500V729.500H746.500ZM850.500 749V764M839.500 732.500H861.500V749.500H839.500ZM944.500 736V750M933.500 719.500H955.500V735.500H933.500ZM1038.500 752V766M1027.500 735.500H1048.500V751.500H1027.500Z"/>
              <path class="il" d="M783.500 730V739M772.500 713.500H794.500V729.500H772.500ZM877.500 737V751M866.500 720.500H888.500V736.500H866.500ZM971.500 761V775M960.500 743.500H981.500V760.500H960.500ZM1065.500 730V735M1054.500 713.500H1075.500V729.500H1054.500Z"/>
              <g class="ts"><text x="757" y="726">8.4</text><text x="850" y="745">6.3</text><text x="944" y="731">7.5</text><text x="1038" y="748">6.1</text></g>
              <g class="ti"><text x="783" y="726">8.5</text><text x="877" y="733">7.4</text><text x="971" y="756">5.4</text><text x="1065" y="726">8.8</text></g>
              <g class="tick"><text x="713" y="726">10</text><text x="710" y="784">5</text><text x="710" y="842">0</text></g>
              <rect class="sat" x="1114.500" y="777.500" width="7" height="7"/><rect class="imp" x="1114.500" y="795.500" width="7" height="7"/><g class="leg"><text x="1126" y="785">Satisfaction</text><text x="1126" y="804">Importance</text></g>
            </svg>
            <svg class="chart" width="282" height="175" viewBox="1210 697 282 175">
              <path class="grid" d="M1237 721.500H1392.500M1237 779.500H1392.500M1314.500 721V837M1392.500 721V837"/>
              <path class="shade" d="M1299 756H1301V837H1299ZM1376 735H1378V837H1376Z"/>
              <path class="axis" d="M1237.500 721V843M1232 721.500H1238M1232 779.500H1238M1232 837.500H1392.500V843M1314.500 837V843"/>
              <path class="sat" d="M1253.500 765.500H1276.500V837H1253.500ZM1331.500 740.500H1353.500V837H1331.500Z"/><path class="imp" d="M1276.500 754.500H1298.500V837H1276.500ZM1353.500 733.500H1375.500V837H1353.500Z"/>
              <path class="sl" d="M1264.500 751V765M1254.500 734.500H1275.500V750.500H1254.500ZM1342.500 730V740M1332.500 713.500H1353.500V729.500H1332.500Z"/>
              <path class="il" d="M1287.500 740V754M1276.500 722.500H1297.500V739.500H1276.500ZM1364.500 730V733M1358.500 713.500H1370.500V729.500H1358.500Z"/>
              <g class="ts"><text x="1265" y="747">6.2</text><text x="1343" y="726">8.4</text></g>
              <g class="ti"><text x="1287" y="735">7.2</text><text x="1365" y="726">9</text></g>
              <g class="tick"><text x="1227" y="726">10</text><text x="1224" y="784">5</text><text x="1224" y="842">0</text></g>
              <rect class="sat" x="1408.500" y="777.500" width="7" height="7"/><rect class="imp" x="1408.500" y="795.500" width="7" height="7"/><g class="leg"><text x="1420" y="785">Satisfaction</text><text x="1420" y="804">Importance</text></g>
            </svg>
            <svg class="chart" width="338" height="175" viewBox="1492 697 338 175">
              <path class="grid" d="M1534 744.500H1725.500M1534 768.500H1725.500M1534 791.500H1725.500M1534 814.500H1725.500M1629.500 721V837M1725.500 721V837"/>
              <path class="shade" d="M1610 758H1612V837H1610ZM1678 735H1680V768H1678ZM1706 770H1708V837H1706Z"/>
              <path class="axis" d="M1534.500 721V843M1529 721.500H1535M1529 744.500H1535M1529 768.500H1535M1529 791.500H1535M1529 814.500H1535M1529 837.500H1725.500V843M1629.500 837V843"/>
              <path class="sat" d="M1554.500 791.500H1582.500V837H1554.500ZM1650.500 733.500H1677.500V837H1650.500Z"/><path class="imp" d="M1582.500 756.500H1609.500V837H1582.500ZM1677.500 768.500H1705.500V837H1677.500Z"/>
              <path class="sl" d="M1568.500 777V791M1557.500 759.500H1578.500V776.500H1557.500ZM1664.500 730V733M1653.500 713.500H1674.500V729.500H1653.500Z"/>
              <path class="il" d="M1595.500 742V756M1585.500 724.500H1606.500V741.500H1585.500ZM1691.500 754V768M1680.500 736.500H1702.500V753.500H1680.500Z"/>
              <g class="ts"><text x="1568" y="772">7.2</text><text x="1664" y="726">7.7</text></g>
              <g class="ti"><text x="1596" y="737">7.5</text><text x="1691" y="749">7.4</text></g>
              <g class="tick"><text x="1524" y="749">7.6</text><text x="1524" y="772">7.4</text><text x="1524" y="795">7.2</text><text x="1519" y="819">7</text><text x="1524" y="842">6.8</text></g>
              <rect class="sat" x="1741.500" y="777.500" width="7" height="7"/><rect class="imp" x="1741.500" y="795.500" width="7" height="7"/><g class="leg"><text x="1753" y="785">Satisfaction</text><text x="1753" y="804">Importance</text></g>
            </svg>
          </div>
          <div class="row effort cols"><b class="side">Level of Effort</b>
            <div class="score high"><p>Far Less Effort<br>than Expected</p><strong>1.6</strong></div>
            <div class="score"><p>Far More Effort than Expected</p><strong>4.3</strong></div>
            <div class="score close"><p>Slightly More Effort<br>than Expected</p><strong>3.7</strong></div>
            <div class="score wide"><p>Slightly more Effort<br>than expected</p><strong>3.9</strong></div>
          </div>
          <a class="ref" href="#togaf-adm"><svg class="ic"><use href="#i-hyper"/></svg>TOGAF-ADM : TOGAF-ADM</a>

          <div class="note n1">Large consumers begin the process by looking through the<br>company website as we are on their suppliers list and recieve<br>good discounts. Smaller and Medium Companies without<br>preferred suppliers skip this step but follow most of the same<br>process.</div>
          <div class="note n2">The Shopping process begins by performing<br>a google search for companies that offer<br>these industrial goods - this is especially true<br>for the small and medium size companies.</div>
          <div class="note n3">After searching google and other<br>third party sites (and our own) the<br>customer is registered into our CRM<br>and passed over to our sales force's<br>Branch in their local area.</div>
          <div class="note n4">Armed with new information about our<br>product customers will check what we<br>have said against our competitors.</div>
          <div class="note n5">Customer check back<br>with our Store and the<br>call center to discuss<br>features of products of<br>our competitors.</div>
          <div class="note n6">Using our product comparisons<br>on the website. Customers start<br>to narrow down their choices.<br>Products can be added to a<br>shopping cart or a request list<br>sent to the back office team.</div>
          <div class="note n7">The process ends when the<br>company places an order<br>either through our website or<br>the call center.</div>

          <svg class="links" width="1431" height="917" viewBox="409 121 1431 917" aria-hidden="true">
            <g class="dash"><path d="M517 348L563 406M589 425L752 482M783 476L851 432M880 432L945 475M978 497L1046 540M1093 534L1247 367M1265 369L1363 627M1378 627L1552 360M1385 637L1673 563"/></g>
            <g class="ev"><circle cx="504" cy="330" r="14.500"/><circle cx="574" cy="420" r="14.500"/><circle cx="864" cy="422" r="14.500"/><path d="M973 485.500A14.500 14.500 0 1 1 973 484.500Z"/><circle cx="1260" cy="352" r="14.500"/><circle cx="1561" cy="344" r="14.500"/><circle cx="1687" cy="559" r="14.500"/></g>
            <use href="#n-cancel" x="751" y="473" width="30" height="30"/>
            <use href="#n-cancel" x="1353" y="626" width="30" height="30"/>
            <path d="M1049 535H1093V579H1049ZM1056 543V571H1086V543Z" fill="url(#hatch)" fill-rule="evenodd"/>
            <use href="#n-cancel" x="1056" y="542" width="30" height="30"/>
            <path class="grip" d="M1049.500 535.500h7v7h-7zM1067.500 535.500h7v7h-7zM1085.500 535.500h7v7h-7zM1049.500 553.500h7v7h-7zM1085.500 553.500h7v7h-7zM1049.500 571.500h7v7h-7zM1067.500 571.500h7v7h-7zM1085.500 571.500h7v7h-7z"/>
            <g class="halo"><path d="M1105.500 551V540M1102 542L1105.500 538L1109 542M1100 562L1104 559L1108 559L1113 555M1108 559L1109 564L1103 566L1100 562M1108 579L1113 584"/><circle cx="1105" cy="576" r="4"/></g>
            <g class="quick"><path d="M1105.500 551V540M1102 542L1105.500 538L1109 542M1100 562L1104 559L1108 559L1113 555M1108 559L1109 564L1103 566L1100 562M1108 579L1113 584"/><circle cx="1105" cy="576" r="4"/></g>
            <path d="M1839.500 706V745M1839.500 785V823" stroke="#c07828"/><path d="M1840 894.500H1837.500V909.500H1840M1840 919.500H1837.500V934.500H1840M1840 946.500H1837.500V961.500H1840" fill="#ffe6a0" stroke="#c8a010"/>
          </svg>
        </div>
      </div>
      <div class="vscroll main-scroll"><svg class="car up"><use href="#i-caret"/></svg><div class="track"><div class="thumb"></div></div><svg class="car"><use href="#i-caret"/></svg></div>
      <div class="hscroll"><svg class="car left"><use href="#i-caret"/></svg><div class="track"><div class="thumb"></div></div><svg class="car right"><use href="#i-caret"/></svg></div>
    </div>
  </main>
</div>

<footer class="status">
  <span>IntermediateEvent:</span><span class="s2">Left:</span><span class="s3">648 x Top:</span><span class="s4">421 - Width:</span><span class="s4">30 x Height:</span><span class="s4">30</span>
  <div class="status-right">
    <button type="button" aria-label="Zoom out"><svg width="7" height="7"><path d="M0 3.500H7" stroke="#fff"/></svg></button>
    <input type="range" aria-label="Diagram zoom" min="0" max="100" value="0">
    <button type="button" aria-label="Zoom in"><svg width="7" height="7"><path d="M0 3.500H7M3.500 0V7" stroke="#fff"/></svg></button>
    <span class="off">CAP</span><span>NUM</span><span class="off">SCRL</span><span class="off">CLOUD</span>
  </div>
</footer>
</body>
</html>
```
FILE: styles.css
```css
:root {
  --ui: "Open Sans", "Noto Sans", sans-serif;
  --arial: "Liberation Sans", Arial, sans-serif;
  --note: Roboto, "Noto Sans", sans-serif;
  --soft: Lato, "Open Sans", sans-serif;
  --frame: #d6dbe9;
  --bar: #cfd6e5;
  --navy: #293955;
  --slate: #4d6082;
}
* { box-sizing: border-box; }
body {
  margin: 0; height: 100vh; overflow: hidden;
  display: flex; flex-direction: column;
  font: 11px/16px var(--ui); color: #1e1e1e; background: var(--frame);
}
button { font: inherit; color: inherit; background: none; border: 0; padding: 0; display: flex; align-items: center; }
h1, h2, h3, p, ul { margin: 0; padding: 0; font-weight: normal; font-size: inherit; }
svg { display: block; flex: none; }
.defs { position: absolute; }
.ic { width: 16px; height: 16px; }
.car { width: 6px; height: 4px; color: #6d6d6d; }

/* title and menu */
.titlebar { display: flex; align-items: center; height: 23px; padding: 0 8px 0 1px; border-bottom: 1px solid #bfc3cd; }
.titlebar h1 { margin-left: 8px; color: #333; }
.winbtns { margin-left: auto; display: flex; gap: 18px; color: #666; }
.menubar { display: flex; align-items: center; gap: 14px; height: 23px; padding: 0 0 2px 17px; color: #111; }

.workspace { flex: 1; min-height: 0; display: flex; background: var(--navy); }

/* auto-hide strip */
.dockstrip { width: 31px; padding-top: 7px; display: flex; flex-direction: column; align-items: stretch; gap: 20px; color: #fff; }
.docktab { writing-mode: vertical-rl; gap: 4px; height: 50px; width: 28px; border-left: 6px solid var(--slate); font-size: 12px; }
.docktab + .docktab { height: 46px; }
.docktab .ic { width: 14px; height: 14px; }

/* docked panels */
.dock { width: 373px; display: flex; flex-direction: column; gap: 4px; }
.panel { display: flex; flex-direction: column; }
.browser { flex: 1; min-height: 0; }
.panel-head { display: flex; align-items: center; gap: 8px; height: 22px; padding: 0 6px 0 4px; background: var(--slate); color: #fff; }
.panel-head h2 { flex: 1; }
.toolbar { display: flex; align-items: center; gap: 6px; height: 25px; padding: 0 4px; background: var(--bar); color: #6d6d6d; }
.toolbar button { gap: 6px; }
.toolbar .sep { width: 1px; height: 20px; background: #b4bccb; margin: 0 1px; }
.tight { padding: 0 3px; gap: 2px; }
.tight button { width: 20px; height: 22px; justify-content: center; }
.tight .sep { margin: 0 2px; }
.tight .pressed { width: 22px; background: #fff1b8; border: 1px solid #e5c365; }
.soft { color: #d86a6a; }
.red { color: #d81818; }
.dim { opacity: .4; }

.tree-wrap { flex: 1; min-height: 0; display: flex; margin-top: 1px; background: #fff; border-left: 1px solid #c4cad6; }
.tree { flex: 1; min-width: 0; overflow: hidden; list-style: none; color: #000; }
.tree li { display: flex; align-items: center; height: 20px; white-space: nowrap; }
.tree .sel { background: #bec3cc; color: #333; }
.tree .ic { margin: 0 4px 0 13px; }
.l0 { padding-left: 9px; } .l1 { padding-left: 32px; } .l2 { padding-left: 55px; } .l3 { padding-left: 78px; }
.ex { width: 9px; height: 9px; flex: none; border: 1px solid #8f8f8f; border-radius: 1px; background: linear-gradient(#3a55a0, #3a55a0) center / 5px 1px no-repeat, #fff; }
.plus { background: linear-gradient(#3a55a0, #3a55a0) center / 5px 1px no-repeat, linear-gradient(#3a55a0, #3a55a0) center / 1px 5px no-repeat, #fff; }
.none { border: 0; background: none; }

.vscroll { width: 17px; flex: none; display: flex; flex-direction: column; align-items: center; background: #d6dbe9; padding: 6px 0; gap: 7px; }
.vscroll .car { width: 9px; height: 5px; }
.up { transform: rotate(180deg); }
.track { flex: 1; display: flex; flex-direction: column; }
.thumb { width: 9px; background: #bdc1ca; }
.tree-scroll { padding-bottom: 5px; }
.tree-scroll .track { padding-top: 18px; }
.tree-scroll .thumb { height: 247px; }
.props-scroll { padding: 6px 0; gap: 5px; }
.props-scroll .thumb { height: 22px; }

.panel-tabs { display: flex; height: 23px; background: var(--slate); color: #dfe5f0; }
.panel-tabs button { gap: 3px; padding: 0 4px 0 3px; }
.panel-tabs .on { background: #fcfcfc; color: #00539c; }

.props { padding: 2px 1px 1px 2px; background: #e6e9f2; }
.props-body { display: flex; height: 119px; overflow: hidden; }
.props table { flex: 1; border-collapse: separate; border-spacing: 0; table-layout: fixed; font: 11px/16px var(--arial); color: #111; height: 119px; }
.col-gut { width: 17px; }
.col-name { width: 150px; }
.props td, .props th { height: 17px; padding: 0 4px; text-align: left; }
.props th { font-size: 12px; }
.props tbody td { border-bottom: 1px solid #e0e4ee; background: #fff; }
.props tbody td:nth-child(2) { border-right: 1px solid #e0e4ee; }
.props thead .gut { padding: 0 0 0 6px; }
.props tbody .gut { padding: 0; background: #e6e9f2; border: 0; }
.props-note { height: 13px; margin-top: 3px; border: 1px solid #98a3b8; }

.zoombar { background: #d6dbe9; }
.zoomslide { flex: 1; align-self: stretch; display: flex; align-items: center; margin-left: 3px; padding: 0 4px 0 8px; border-left: 3px solid #f0f0f0; }
input[type="range"] { appearance: none; width: 100%; height: 16px; margin: 0; background: linear-gradient(#8a98b0, #8a98b0) center / 100% 1px no-repeat; }
input[type="range"]::-webkit-slider-thumb { appearance: none; width: 5px; height: 16px; background: #e2e6f0; border: 1px solid #8090a8; }
.overview { background: #f0f0f0; height: 180px; overflow: hidden; }

/* editor */
.editor { flex: 1; min-width: 0; display: flex; flex-direction: column; margin-left: 4px; border: solid #9aa0ac; border-width: 1px 1px 0 1px; background: var(--frame); }
.caption { display: flex; align-items: center; height: 27px; padding: 1px 8px 0 6px; gap: 9px; border-bottom: 1px solid #9aa0ac; font: 11px/16px var(--arial); color: #6d6d6d; }
.caption span { flex: 1; margin-left: 9px; }
.caption button { color: #000; margin-left: 5px; }
.caption .wide-gap { margin-left: 12px; }
.tabs { display: flex; height: 22px; padding-left: 2px; background: var(--slate); border-bottom: 1px solid var(--navy); color: #e4e9f2; }
.tab { gap: 3px; padding: 1px 9px 0 0; }
.tab.on { margin: 1px 0 0 -2px; padding: 0 7px 0 2px; background: #fcfcfc; color: #00539c; font-weight: 600; }
.tab .x { margin-left: 10px; color: #666; }
.tabnav { margin-left: auto; display: flex; align-items: center; gap: 3px; padding-right: 2px; }
.tabnav button { width: 15px; height: 15px; justify-content: center; background: var(--navy); }
.draw { padding: 0 4px; }
.draw button { gap: 5px; }
.draw .sep { margin: 0; }
.bigA { width: 16px; font: bold 16px/20px "Liberation Serif", serif; color: #102080; margin-right: 3px; }
.draw input { font: 11px/14px var(--ui); color: #111; background: #fcfcfc; border: 1px solid #8591a8; height: 17px; padding: 0 4px; }
.spin { position: relative; display: flex; width: 45px; }
.spin input { width: 100%; }
.spin svg { position: absolute; right: 6px; top: 3px; }
.pick { position: relative; display: flex; width: 146px; }
.pick select { appearance: none; width: 100%; height: 18px; padding: 0 3px; border: 1px solid #8591a8; border-radius: 0; background: #fcfcfc; font: 11px/14px var(--ui); color: #111; }
.pick .car { position: absolute; right: 5px; top: 7px; }
.draw .filter { width: 116px; }

.view { flex: 1; min-height: 0; display: grid; grid-template: 1fr 18px / 1fr 17px; }
.canvas { background: #fff; overflow: hidden; }
.main-scroll { grid-row: 1 / 3; padding-bottom: 23px; }
.main-scroll .thumb { height: 722px; }
.hscroll { grid-row: 2; grid-column: 1; display: flex; align-items: center; padding: 0 5px; gap: 6px; background: var(--frame); }
.hscroll .car { width: 9px; height: 5px; }
.hscroll .left { transform: rotate(90deg); }
.hscroll .right { transform: rotate(-90deg); }
.hscroll .thumb { width: 75%; height: 9px; }

/* diagram sheet */
.sheet { position: relative; width: 1431px; height: 917px; color: #000; display: flex; flex-direction: column; }
.cols { display: grid; grid-template-columns: 48px 233px 520px 282px 339px; }
.columns { position: absolute; inset: 0 auto 0 0; border-top: 1px solid #000; }
.columns i + i { border-left: 1px solid #000; }
.columns i:last-child { border-right: 1px solid #000; }
.c1 { background: linear-gradient(#fff, #aff); } .c2 { background: linear-gradient(#fff, #aaffc8); } .c3 { background: linear-gradient(#fff, #afa); } .c4 { background: linear-gradient(#fff, #9f6); }
.row { position: relative; width: 1424px; }
.heads { height: 22px; padding-top: 2px; font: 10px/12px var(--arial); align-items: center; text-align: center; }
.phase, .goal { background: linear-gradient(#000 1px, #c4c4c4 1px) 27px 0 / 100% 2px no-repeat; }
.phase { height: 42px; padding-top: 2px; align-items: center; text-align: center; font: 10px/12px var(--note); }
.phase span:nth-of-type(odd) { padding-right: 10px; }
.side { justify-self: start; align-self: stretch; display: flex; align-items: center; justify-content: center; writing-mode: vertical-rl; rotate: 180deg; font: 11px/13px var(--arial); text-align: center; }
.phase .side, .goal .side { justify-self: end; width: 21px; border-right: 1px solid #000; }
.phase .side { margin-top: -2px; }
.goal { height: 109px; font: 12px/15px var(--ui); white-space: nowrap; }
.g1 { padding: 18px 0 0 11px; } .g2 { padding: 29px 0 0 26px; } .g3 { padding: 18px 0 0 25px; } .g4 { padding: 36px 0 0 57px; }

.lanes { position: relative; margin-left: 5px; width: 1419px; }
.lane { display: flex; border: 1px solid #000; border-radius: 3px; font: 11px/13px var(--arial); }
.lane b { writing-mode: vertical-rl; rotate: 180deg; text-align: center; font-weight: normal; border-left: 1px solid #000; width: 31px; padding: 0 3px 0 1px; }
.web { height: 83px; background: linear-gradient(90deg, #0080ff 35%, #006cd8); }
.third { height: 76px; background: linear-gradient(90deg, #a0a0ff 35%, #7878ff); }
.sales { height: 66px; background: linear-gradient(90deg, #d0a0ff 35%, #c078ff); }
.call { height: 78px; background: linear-gradient(90deg, #ffa0ff 35%, #ff78ff); }
.office { height: 93px; background: linear-gradient(90deg, #ff58c0 35%, #ff30b0); }
.sales b { width: 44px; }
.call b, .office b { width: 20px; }
.lane-lines { position: absolute; inset: 0 0 0 -5px; }
.lane-lines i:nth-child(n+3) { border-left: 1px solid #000; }
.lane-lines i:last-child { border-right: 1px solid #000; }
.lanes h3 { position: absolute; left: 719px; top: 9px; font: bold 17px/24px var(--soft); }

.survey { height: 182px; padding-top: 7px; }
.survey::before { content: ""; position: absolute; inset: -1px 2px auto 281px; height: 2px; background: #000; }
.survey .side { margin: -7px 0 0 5px; width: 32px; border: solid #000; border-width: 0 1px; background: #fff; }
.chart { background: #fff; font: 11px var(--soft); }
.chart path { fill: none; }
.chart .grid { stroke: #d4d4d4; }
.chart .shade { fill: #dcdcdc; }
.chart .axis { stroke: #222; }
.chart .sat { fill: rgba(72, 106, 216, .7); stroke: #2f5ad0; }
.chart .imp { fill: rgba(196, 98, 98, .75); stroke: #bf4040; }
.chart .sl { stroke: #2f5ad0; fill: #f2f5fe; }
.chart .il { stroke: #bf4040; fill: #fcf2f2; }
.ts, .ti { text-anchor: middle; fill: #3a52b0; }
.ti { fill: #a84444; }
.tick { text-anchor: end; }

.effort { height: 90px; border: solid #000; border-width: 1px 0; }
.effort::before { content: ""; position: absolute; inset: -1px auto -1px 0; width: 5px; background: #fff; }
.effort .side { margin-left: 5px; width: 21px; border: solid #000; border-width: 0 1px; }
.score { display: flex; align-items: center; padding-left: 12px; font: 19px/26px var(--soft); white-space: nowrap; }
.score p { padding-top: 2px; }
.score strong { font: 57px/64px var(--soft); margin: 18px 17px 0 auto; }
.score.high strong { margin: 2px 20px 0 auto; }
.score.close { padding-left: 17px; }
.score.close strong { margin-right: 8px; }
.score.wide { padding-left: 16px; }
.score.wide strong { margin-right: 24px; }
.ref { position: relative; display: flex; align-items: center; gap: 9px; padding: 27px 0 0 58px; color: #000; text-decoration: none; font: 10px/18px var(--note); }

/* notes placed on the diagram */
.note { position: absolute; isolation: isolate; padding: 15px 0 0 5px; font: 10px/12px var(--note); white-space: nowrap; filter: drop-shadow(2px 2px 0 rgba(110, 110, 140, .45)); }
.note::before, .note::after { content: ""; position: absolute; inset: 0; z-index: -1; background: #000; clip-path: polygon(0 0, calc(100% - 13px) 0, 100% 13px, 100% 100%, 0 100%); }
.note::after { inset: 1px; background: linear-gradient(45deg, #dcdcdc 8px, #000 8px, #000 9px, transparent 9px) right top / 12px 12px no-repeat, linear-gradient(#000, #000) right 12px top 0 / 1px 12px no-repeat, linear-gradient(#000, #000) right 0 top 12px / 13px 1px no-repeat, #fff; }
.n1 { left: 117px; top: 183px; width: 284px; height: 83px; }
.n2 { left: 48px; top: 296px; width: 210px; height: 71px; }
.n3 { left: 255px; top: 376px; width: 177px; height: 80px; }
.n4 { left: 437px; top: 238px; width: 189px; height: 56px; }
.n5 { left: 564px; top: 339px; width: 116px; height: 80px; }
.n6 { left: 902px; top: 293px; width: 151px; height: 92px; }
.n7 { left: 1211px; top: 225px; width: 141px; height: 73px; }
.links { position: absolute; inset: 0; }
.dash { fill: none; stroke: #000; stroke-dasharray: 3 4; }
.ev { fill: url(#gNode); stroke: #111; stroke-width: 1; }
.grip { fill: #c8c8c8; stroke: #000; }
.halo { fill: none; stroke: #fff; stroke-width: 3; }
.quick { fill: none; stroke: #000; stroke-width: 1.3; }

/* status bar */
.status { display: flex; align-items: center; height: 24px; padding: 0 12px 0 2px; background: #007acc; color: #fff; }
.s2 { margin-left: 8px; } .s3 { margin-left: 16px; } .s4 { margin-left: 11px; }
.status-right { margin-left: auto; display: flex; align-items: center; gap: 19px; }
.status-right input { width: 90px; margin: 0 -8px; }
.off { color: #5f8aa8; }
```
